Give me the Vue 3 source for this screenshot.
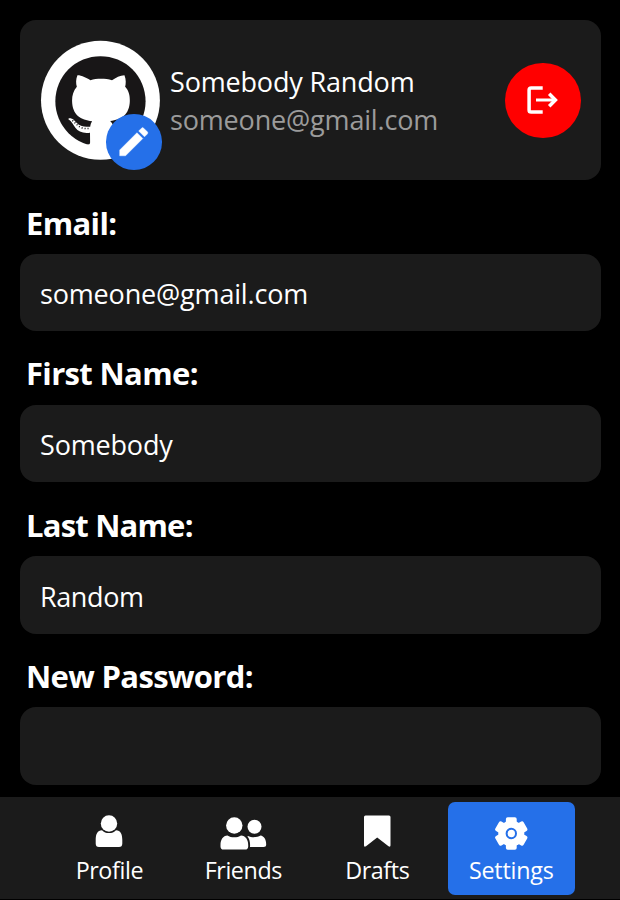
<script setup>
const fields = [
  { id: 'email', label: 'Email:', value: 'someone@gmail.com', type: 'text' },
  { id: 'first', label: 'First Name:', value: 'Somebody', type: 'text' },
  { id: 'last', label: 'Last Name:', value: 'Random', type: 'text' },
  { id: 'password', label: 'New Password:', value: '', type: 'password' },
]
const tabs = ['Profile', 'Friends', 'Drafts', 'Settings']
const teeth = [0, 60, 120, 180, 240, 300]
</script>

<template>
  <div class="screen">
    <main class="content">
      <section class="card">
        <div class="avatar">
          <svg class="cat" viewBox="0 0 120 120">
            <circle cx="59.700" cy="59.500" r="59.700" fill="#fff" />
            <circle cx="59.700" cy="60.500" r="45.300" fill="#181617" />
            <path
              fill="#fff"
              d="M36.6 34.3C41 34.3 46 37 49.6 39.3C56 37.500 64.500 37.500 71.300 39.300C75 36.900 79.500 34.300 83.800 34.300C85.600 38.500 85.300 43 84.500 46C88.200 50 89.300 54.500 89.200 60C89 74 80.500 79.100 69.500 80.300C72.500 83 73.300 86.500 73.300 90.500V108H46.500L45.400 104.300C48.200 104.400 49.300 103.400 49.300 102L49.200 92.200C42 93.200 37.500 91 34.500 87.200C32.300 84.300 31 80.800 27.500 78.700C27 77.300 30.500 77 32.800 79.200C36.500 82.800 38.500 87.300 49.400 86C49.700 84 50.200 82 51.400 80.500C40 79.300 31.400 74.500 31.200 60C31.200 54.500 32.600 50 36 46C35 42.500 34.900 38 36.600 34.300Z"
            />
            <path
              d="M31.500 79.800C36 83.200 37.500 88.700 49 87.900"
              fill="none" stroke="#181617" stroke-width="1.500" stroke-dasharray="1 2"
            />
          </svg>
          <button class="edit" aria-label="Edit">
            <svg viewBox="0 0 24 24" fill="#fff" stroke="#fff" stroke-width="0.250">
              <path d="M3 17.250V21h3.750L17.810 9.940l-3.750-3.750L3 17.250zM20.710 7.040a.996.996 0 0 0 0-1.410l-2.340-2.340a.996.996 0 0 0-1.410 0l-1.830 1.830 3.750 3.750 1.830-1.830z" />
            </svg>
          </button>
        </div>
        <div class="who">
          <div class="name">Somebody Random</div>
          <div class="mail">someone@gmail.com</div>
        </div>
        <button class="logout" aria-label="Log out">
          <svg viewBox="0 0 32 32" fill="none" stroke="#fff" stroke-width="3.500">
            <path d="M16.700 2.900H5.200Q3.100 2.900 3.100 5V25Q3.100 27.100 5.200 27.100H16.700" />
            <path d="M10 15H29" stroke-width="3" />
            <path d="M23.200 8.800L29.400 15L23.200 21.200" />
          </svg>
        </button>
      </section>

      <div v-for="f in fields" :key="f.id" class="field">
        <label :for="f.id" :class="['label', 'label-' + f.id]">{{ f.label }}</label>
        <input :id="f.id" :class="['input', 'in-' + f.id]" :type="f.type" :value="f.value" />
      </div>
    </main>

    <nav class="nav">
      <a v-for="t in tabs" :key="t" :class="['tab', t.toLowerCase(), { active: t === 'Settings' }]">
        <svg class="icon" viewBox="0 0 48 36" fill="#fff">
          <template v-if="t === 'Profile'">
            <path d="M17 16.200C18.800 18.300 21 19 24 19S29.200 18.300 31 16.200C35.500 16.200 37.300 20 37.300 26V29.500Q37.300 33 34 33H14Q10.700 33 10.700 29.500V26C10.700 20 12.500 16.200 17 16.200Z" />
            <circle cx="24" cy="9.500" r="8.200" />
          </template>
          <template v-else-if="t === 'Friends'">
            <circle cx="15.300" cy="11.500" r="8.200" />
            <path d="M8.500 21.400C12 24 18.500 24 22 21.400C26.500 21.500 29.200 25.500 29.200 31V32.500Q29.200 35.600 26 35.600H4.500Q1.500 35.600 1.500 32.500V31C1.500 25.500 4 21.500 8.500 21.400Z" />
            <circle cx="35.500" cy="12.800" r="7" />
            <path d="M29 22C32.500 23.700 38 23.700 41.500 21.600C45 22.200 47.200 25.500 47.200 30.500Q47.200 33 44.500 33H31C31.400 28.500 30.400 24.500 28.400 22.400Z" />
          </template>
          <path
            v-else-if="t === 'Drafts'"
            d="M12.500 1.500H36Q37.500 1.500 37.500 3V31.300Q37.500 33.400 35.500 32.200L24.200 23.500L13 32.200Q11 33.400 11 31.300V3Q11 1.500 12.500 1.500Z"
          />
          <template v-else>
            <circle cx="24.300" cy="19.500" r="13" />
            <rect
              v-for="a in teeth" :key="a"
              x="18.900" y="3.200" width="10.800" height="12" rx="1.800"
              :transform="`rotate(${a} 24.3 19.5)`"
            />
            <circle cx="24.300" cy="19.500" r="4.700" fill="none" stroke="#2570e9" stroke-width="2" />
          </template>
        </svg>
        <span class="tab-text">{{ t }}</span>
      </a>
    </nav>
  </div>
</template>

<style>
body {
  margin: 0;
  background: #000;
  overflow: hidden;
}
</style>

<style scoped>
.screen {
  width: 620px;
  height: 900px;
  overflow: hidden;
  display: flex;
  flex-direction: column;
  background: #000;
  color: #fff;
  font-family: 'Open Sans', 'Noto Sans', sans-serif;
}
.content {
  height: 797px;
  flex: none;
  box-sizing: border-box;
  padding: 20px 19.500px 0 20px;
}
button {
  border: 0;
  padding: 0;
  display: flex;
  align-items: center;
  justify-content: center;
  border-radius: 50%;
}
.card {
  height: 160px;
  box-sizing: border-box;
  padding: 1px 20px 0 20.500px;
  display: flex;
  align-items: center;
  border-radius: 16px;
  background: #1b1b1b;
}
.avatar {
  position: relative;
  width: 119.500px;
  height: 119.500px;
}
.cat {
  display: block;
  width: 100%;
  height: 100%;
  overflow: visible;
}
.edit {
  position: absolute;
  right: -2.300px;
  bottom: -9.500px;
  width: 56.400px;
  height: 56px;
  background: #2570e9;
}
.edit svg {
  width: 37.500px;
  height: 37.500px;
}
.who {
  flex: 1;
  padding: 1px 0 0 10px;
  white-space: nowrap;
}
.name,
.mail {
  height: 38px;
  line-height: 38px;
  font-size: 27px;
  letter-spacing: -0.170px;
}
.mail {
  color: #9b9b9b;
}
.logout {
  width: 76px;
  height: 75.500px;
  background: #f00;
}
.logout svg {
  width: 32px;
  height: 32px;
  margin-right: 2px;
}
.field {
  height: 151.200px;
  display: flex;
  flex-direction: column;
}
.label {
  height: 74px;
  box-sizing: border-box;
  padding: 22px 0 0 6px;
  line-height: 41px;
  font-size: 31px;
  font-weight: 700;
  letter-spacing: -0.650px;
  white-space: nowrap;
}
.label-email,
.label-last {
  padding-top: 23px;
}
.label-last {
  letter-spacing: -0.800px;
}
.input {
  display: block;
  width: 100%;
  height: 77.500px;
  box-sizing: border-box;
  padding: 2px 20px 0;
  border: 0;
  outline: 0;
  border-radius: 16px;
  background: #1b1b1b;
  color: #fff;
  font-family: inherit;
  font-size: 27px;
  letter-spacing: -0.170px;
}
.in-last {
  padding-top: 4px;
  letter-spacing: -0.400px;
}
.nav {
  height: 102px;
  box-sizing: border-box;
  padding: 5px 0 0 46px;
  display: flex;
  gap: 7.300px;
  background: #1b1b1b;
}
.tab {
  width: 126.700px;
  height: 92.500px;
  box-sizing: border-box;
  padding-top: 12px;
  display: flex;
  flex-direction: column;
  align-items: center;
  border-radius: 7px;
}
.active {
  background: #2570e9;
}
.icon {
  width: 48px;
  height: 36px;
  flex: none;
}
.tab-text {
  line-height: 40px;
  font-size: 23.300px;
  letter-spacing: -0.400px;
}
.settings .tab-text {
  letter-spacing: -0.200px;
}
</style>
